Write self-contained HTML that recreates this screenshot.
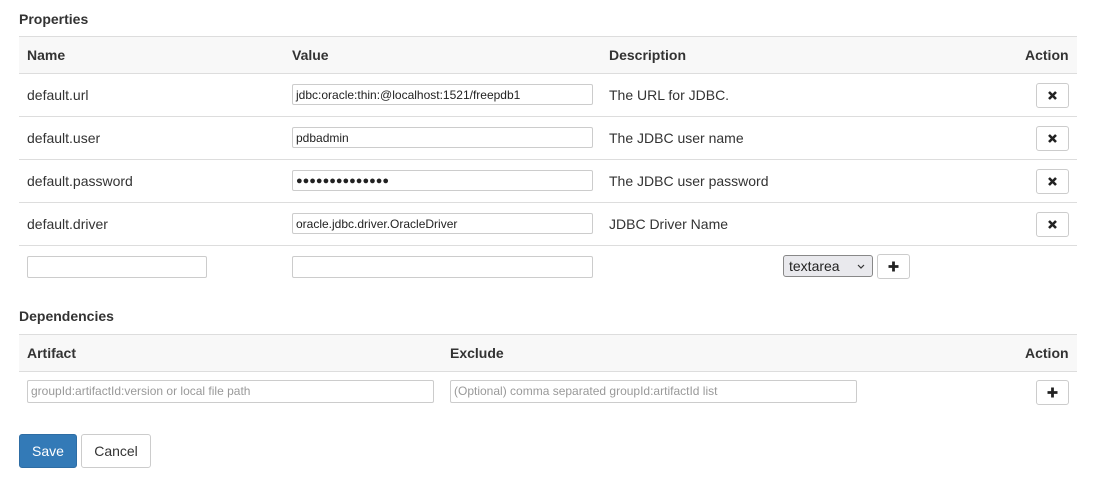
<!DOCTYPE html><html><head><style>
body{margin:0;width:1101px;height:484px;background:#fff;font-family:"Liberation Sans",Arial,sans-serif;color:#333;position:relative;overflow:hidden}
.a{position:absolute}
.t{font-size:14px;font-weight:bold}
.hd{position:absolute;left:19px;width:1058px;background:#f8f8f8;border-top:1px solid #ddd;border-bottom:1px solid #ddd}
.ln{position:absolute;left:19px;width:1058px;height:1px;background:#ddd}
.tx{font-size:14px;position:absolute}
.in{position:absolute;height:21px;border:1px solid #ccc;border-radius:2px;box-sizing:border-box;font-size:12px;line-height:20px;padding-left:3px;color:#222;background:#fff}
.ph{color:#999}
.btn{position:absolute;width:33px;height:25px;border:1px solid #ccc;border-radius:3px;box-sizing:border-box;background:#fff}
.btn svg{position:absolute;left:10px;top:6px}
</style></head><body>
<div class="a t" style="left:19px;top:11px">Properties</div>
<div class="hd" style="top:36px;height:36px"></div>
<div class="a t" style="left:27px;top:47px">Name</div>
<div class="a t" style="left:292px;top:47px">Value</div>
<div class="a t" style="left:609px;top:47px">Description</div>
<div class="a t" style="left:1025px;top:47px">Action</div>
<div class="ln" style="top:116px"></div><div class="ln" style="top:159px"></div><div class="ln" style="top:202px"></div><div class="ln" style="top:245px"></div>
<div class="tx" style="left:27px;top:87px">default.url</div>
<div class="in" style="left:292px;top:84px;width:301px">jdbc:oracle:thin:@localhost:1521/freepdb1</div>
<div class="tx" style="left:609px;top:87px">The URL for JDBC.</div>
<div class="btn" style="left:1036px;top:83px"><svg width="11" height="11" viewBox="0 0 11 11"><path d="M2 2L9 9M9 2L2 9" stroke="#222" stroke-width="2.6"/></svg></div>
<div class="tx" style="left:27px;top:130px">default.user</div>
<div class="in" style="left:292px;top:127px;width:301px">pdbadmin</div>
<div class="tx" style="left:609px;top:130px">The JDBC user name</div>
<div class="btn" style="left:1036px;top:126px"><svg width="11" height="11" viewBox="0 0 11 11"><path d="M2 2L9 9M9 2L2 9" stroke="#222" stroke-width="2.6"/></svg></div>
<div class="tx" style="left:27px;top:173px">default.password</div>
<div class="in" style="left:292px;top:170px;width:301px;font-size:11px">●●●●●●●●●●●●●●</div>
<div class="tx" style="left:609px;top:173px">The JDBC user password</div>
<div class="btn" style="left:1036px;top:169px"><svg width="11" height="11" viewBox="0 0 11 11"><path d="M2 2L9 9M9 2L2 9" stroke="#222" stroke-width="2.6"/></svg></div>
<div class="tx" style="left:27px;top:216px">default.driver</div>
<div class="in" style="left:292px;top:213px;width:301px">oracle.jdbc.driver.OracleDriver</div>
<div class="tx" style="left:609px;top:216px">JDBC Driver Name</div>
<div class="btn" style="left:1036px;top:212px"><svg width="11" height="11" viewBox="0 0 11 11"><path d="M2 2L9 9M9 2L2 9" stroke="#222" stroke-width="2.6"/></svg></div>
<div class="in" style="left:27px;top:256px;width:180px;height:22px"></div>
<div class="in" style="left:292px;top:256px;width:301px;height:22px"></div>
<div class="in" style="left:783px;top:255px;width:90px;height:22px;background:#e9e9ed;border-color:#888;border-radius:3px;font-size:14px;line-height:20px;padding-left:5px">textarea<svg style="position:absolute;right:7px;top:8px" width="8" height="5" viewBox="0 0 8 5"><path d="M1 1L4 4L7 1" stroke="#333" stroke-width="1.2" fill="none"/></svg></div>
<div class="btn" style="left:877px;top:254px"><svg width="11" height="11" viewBox="0 0 11 11"><path d="M5.5 0.5V10.5M0.5 5.5H10.5" stroke="#222" stroke-width="2.8"/></svg></div>
<div class="a t" style="left:19px;top:308px">Dependencies</div>
<div class="hd" style="top:334px;height:36px"></div>
<div class="a t" style="left:27px;top:345px">Artifact</div>
<div class="a t" style="left:450px;top:345px">Exclude</div>
<div class="a t" style="left:1025px;top:345px">Action</div>
<div class="in ph" style="left:27px;top:380px;width:407px;height:23px;line-height:21px">groupId:artifactId:version or local file path</div>
<div class="in ph" style="left:450px;top:380px;width:407px;height:23px;line-height:21px">(Optional) comma separated groupId:artifactId list</div>
<div class="btn" style="left:1036px;top:380px"><svg width="11" height="11" viewBox="0 0 11 11"><path d="M5.5 0.5V10.5M0.5 5.5H10.5" stroke="#222" stroke-width="2.8"/></svg></div>
<div class="a" style="left:19px;top:434px;width:58px;height:34px;background:#337ab7;border:1px solid #2e6da4;box-sizing:border-box;border-radius:3px;color:#fff;font-size:14px;text-align:center;line-height:32px">Save</div>
<div class="a" style="left:81px;top:434px;width:70px;height:34px;background:#fff;border:1px solid #ccc;box-sizing:border-box;border-radius:3px;color:#333;font-size:14px;text-align:center;line-height:32px">Cancel</div>
</body></html>
